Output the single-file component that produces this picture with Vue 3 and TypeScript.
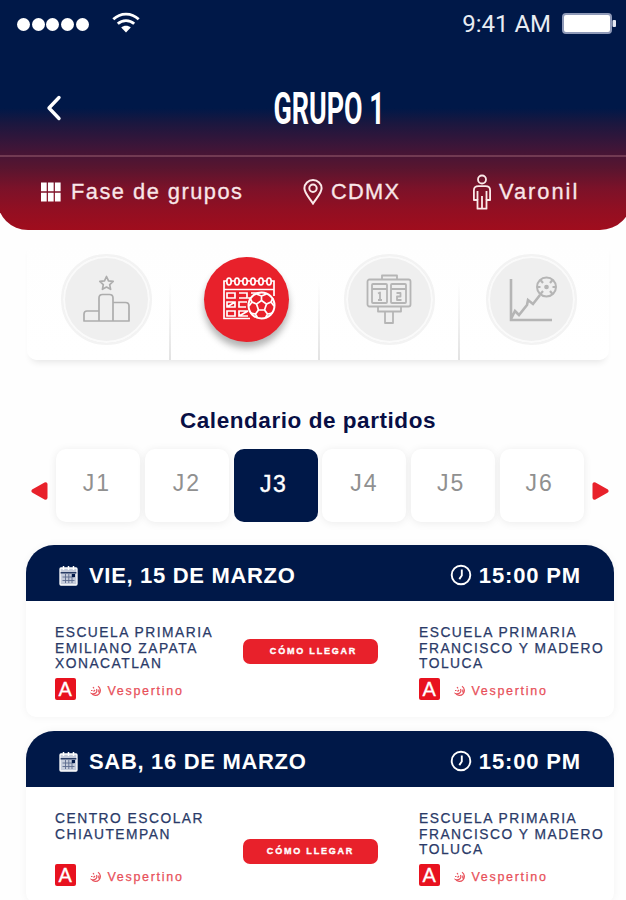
<script setup lang="ts">
import { ref } from 'vue'

interface Team {
  lines: string[]
  badge: string
  shift: string
}

interface Match {
  day: string
  time: string
  home: Team
  away: Team
}

const rounds: string[] = ['J1', 'J2', 'J3', 'J4', 'J5', 'J6']
const selected = ref('J3')

const toluca: Team = {
  lines: ['ESCUELA PRIMARIA', 'FRANCISCO Y MADERO', 'TOLUCA'],
  badge: 'A',
  shift: 'Vespertino',
}

const matches: Match[] = [
  {
    day: 'VIE, 15 DE MARZO',
    time: '15:00 PM',
    home: {
      lines: ['ESCUELA PRIMARIA', 'EMILIANO ZAPATA', 'XONACATLAN'],
      badge: 'A',
      shift: 'Vespertino',
    },
    away: toluca,
  },
  {
    day: 'SAB, 16 DE MARZO',
    time: '15:00 PM',
    home: {
      lines: ['CENTRO ESCOLAR', 'CHIAUTEMPAN'],
      badge: 'A',
      shift: 'Vespertino',
    },
    away: toluca,
  },
]
</script>

<template>
  <div class="screen">
    <header class="header">
      <div class="status">
        <div class="signal"><i v-for="n in 5" :key="n"></i></div>
        <svg class="wifi" width="28" height="21" viewBox="0 0 28 21" fill="none" stroke="#fff" stroke-width="2.8">
          <path d="M1.3 7.2C8.5.3 19.500.3 26.700 7.200" />
          <path d="M5.800 11.800c4.600-4.300 11.800-4.300 16.400 0" />
          <path d="M9.200 15.600c2.700-2.600 6.900-2.600 9.600 0L14 20.500z" fill="#fff" stroke="none" />
        </svg>
        <span class="clock">9:41 AM</span>
        <svg class="battery" width="54" height="21" viewBox="0 0 54 21">
          <rect x="1" y="1" width="48" height="19" rx="3" fill="#fff" stroke="#8f9ab8" stroke-width="2" />
          <rect x="50.500" y="7" width="3.500" height="7" rx="1" fill="#e5e9f2" />
        </svg>
      </div>
      <div class="title-row">
        <svg class="back" width="16" height="26" viewBox="0 0 16 26" fill="none" stroke="#fff" stroke-width="3.400" stroke-linecap="round" stroke-linejoin="round">
          <path d="M13 2.500 3 13l10 10.500" />
        </svg>
        <h1 class="title"><span>GRUPO 1</span></h1>
      </div>
      <div class="filters">
        <div class="filter phase">
          <svg width="20" height="20" viewBox="0 0 21 20" fill="#fff">
            <path d="M0 0h6v9.300H0zM7.300 0h6v9.300h-6zM14.600 0h6v9.300h-6zM0 10.700h6V20H0zM7.300 10.700h6V20h-6zM14.600 10.700h6V20h-6z" />
          </svg>
          <span>Fase de grupos</span>
        </div>
        <div class="filter place">
          <svg width="20" height="26" viewBox="0 0 20 26" fill="none" stroke="#fbe9e9" stroke-width="2">
            <path d="M10 24.500C7 19.500 1.400 14.300 1.400 9.300a8.600 8.300 0 0 1 17.200 0c0 5-5.600 10.200-8.600 15.200z" />
            <circle cx="10" cy="9.300" r="3.700" />
          </svg>
          <span>CDMX</span>
        </div>
        <div class="filter branch">
          <svg width="20" height="36" viewBox="0 0 20 36" fill="none" stroke="#fbe9e9" stroke-width="1.800" stroke-linejoin="round">
            <circle cx="10" cy="5.500" r="4" />
            <path d="M6.500 12.200h7c3 0 4.600 1.300 4.600 4V26h-3.600v8.700H5.500V26H1.900v-9.800c0-2.700 1.600-4 4.600-4z" />
            <path d="M5.500 17v9M14.500 17v9M10 22v12.700" />
          </svg>
          <span>Varonil</span>
        </div>
      </div>
    </header>

    <nav class="tabs">
      <div class="tab">
        <div class="disc">
          <svg width="48" height="48" viewBox="0 0 48 48" fill="none" stroke="#adadad" stroke-width="1.700" stroke-linejoin="round">
            <path d="m24.500 1.500 2 4.300 4.700.6-3.500 3.200.9 4.700-4.100-2.300-4.100 2.300.9-4.700-3.500-3.200 4.700-.6z" />
            <path d="M17 46V23q0-3.500 3.500-3.500h7q3.500 0 3.500 3.500v23zM31 27.500h12.500q3.500 0 3.500 3.500v15H31M17 36H5q-3 0-3 3v7h15" />
          </svg>
        </div>
      </div>
      <div class="tab">
        <div class="disc active">
          <svg width="54" height="46" viewBox="0 0 54 46" fill="none" stroke="#fff" stroke-width="1.700">
            <path d="M28 42.500H2V5h50v15M2 13.500h50" />
            <g fill="#e8212b">
              <ellipse cx="7" cy="5.500" rx="2.200" ry="3.500" /><ellipse cx="15" cy="5.500" rx="2.200" ry="3.500" />
              <ellipse cx="23" cy="5.500" rx="2.200" ry="3.500" /><ellipse cx="31" cy="5.500" rx="2.200" ry="3.500" />
              <ellipse cx="39" cy="5.500" rx="2.200" ry="3.500" /><ellipse cx="47" cy="5.500" rx="2.200" ry="3.500" />
            </g>
            <path d="M5 17h8v5H5zM5 26h8v5H5zM5 35h8v5H5zM17 17h8v5h-8M25 26h-8v5h7M26 35h-9v5h9M5 31l8-5M17 40l9-5" />
            <path d="M29 17h7M26 22h3" />
            <circle cx="39.500" cy="29.500" r="13" fill="#e8212b" stroke-width="2" />
            <path d="m39.500 24.500 5 3.500-2 6h-6l-2-6z" />
            <path d="M39.500 24.500V20l-5-2M39.500 20l5-2M44.500 28l4.500-2 2-4M49 26l3 4M42.500 34l3 4 5-1M45.500 38l-2 4M36.500 34l-3 4-5-1M33.500 38l2 4M34.500 28 30 26l-2-4M30 26l-3 4" />
          </svg>
        </div>
      </div>
      <div class="tab">
        <div class="disc">
          <svg width="46" height="52" viewBox="0 0 46 52" fill="none" stroke="#b5b5b5" stroke-width="1.800" stroke-linejoin="round">
            <rect x="1.500" y="6.500" width="43" height="27" rx="2" />
            <path d="M16 6.500v-4h15v4M12 34v4.500h23V34M19 39v11h8V39" />
            <rect x="6" y="11" width="15" height="19" rx="1" />
            <rect x="25" y="11" width="15" height="19" rx="1" />
            <path d="M6 16h15M25 16h15M12 20.500l2-1v7.500M12 27h4M30.500 20h4v3.500h-3.500V27h4.500" />
          </svg>
        </div>
      </div>
      <div class="tab">
        <div class="disc">
          <svg width="50" height="48" viewBox="0 0 50 48" fill="none" stroke="#b5b5b5" stroke-width="2.600">
            <path d="M4 4v41h41M4 44l4-8 4 4 8-10 1-5 5 4 7-9" />
            <circle cx="39.500" cy="12" r="9.500" stroke-width="2" />
            <circle cx="39.500" cy="12" r="1.600" fill="#b5b5b5" stroke-width="1.500" />
            <path d="m33.500 5 2.500 3M45.500 5l-2.500 3M33.500 19l2.500-3M45.500 19l-2.500-3M30.500 12h3M45.500 12h3" stroke-width="2.200" />
          </svg>
        </div>
      </div>
    </nav>

    <h2 class="heading">Calendario de partidos</h2>

    <div class="rounds">
      <svg class="arrow" width="17" height="20" viewBox="0 0 17 20" fill="#e8212b" stroke="#e8212b" stroke-width="4" stroke-linejoin="round">
        <path d="M2.500 10 14.500 3.300v13.400z" />
      </svg>
      <div class="round-list">
        <button
          v-for="r in rounds"
          :key="r"
          type="button"
          class="round"
          :class="{ selected: r === selected }"
          @click="selected = r"
        >{{ r }}</button>
      </div>
      <svg class="arrow" width="17" height="20" viewBox="0 0 17 20" fill="#e8212b" stroke="#e8212b" stroke-width="4" stroke-linejoin="round">
        <path d="M14.500 10 2.500 3.300v13.400z" />
      </svg>
    </div>

    <section class="matches">
      <article v-for="m in matches" :key="m.day" class="card">
        <div class="card-head">
          <svg width="19" height="21" viewBox="0 0 19 21">
            <rect x="1" y="3" width="17" height="17" rx="1" fill="#c5ccdb" stroke="#fff" stroke-width="1.300" />
            <path d="M1.600 7.800h15.800" stroke="#001848" stroke-width="1.200" />
            <path d="M3.500 12h12M3.500 15.500h12M6.500 9v9M9.800 9v9M13 9v9" stroke="#5c6b8d" stroke-width=".9" />
            <path d="M4.500 1v4M9.500 1v4M14.500 1v4" stroke="#fff" stroke-width="1.500" />
            <rect x="13" y="9" width="3" height="3" fill="#001848" />
          </svg>
          <span class="day">{{ m.day }}</span>
          <svg width="22" height="22" viewBox="0 0 22 22" fill="none" stroke="#fff" stroke-width="1.900">
            <circle cx="11" cy="11" r="9.300" />
            <path d="M11.800 5.500v6l-2.500 3.600" />
          </svg>
          <span class="time">{{ m.time }}</span>
        </div>
        <div class="card-body">
          <div v-for="(t, i) in [m.home, m.away]" :key="i" class="team" :class="i === 0 ? 'home' : 'away'">
            <div class="name"><div v-for="l in t.lines" :key="l">{{ l }}</div></div>
            <div class="meta">
              <span class="badge">{{ t.badge }}</span>
              <svg width="12" height="12" viewBox="0 0 12 12" fill="none" stroke="#e8505a" stroke-width="1.200">
                <path d="M8 1.200a5 5 0 1 1-6.600 7.300C4.500 9.500 8 7.500 6.500 4M1 5.500h1.500M3 2l1 1.300M3.500 6.500 5 5M8.800 4.500v3" />
              </svg>
              <span class="shift">{{ t.shift }}</span>
            </div>
          </div>
          <button type="button" class="directions" :class="{ low: m.home.lines.length < 3 }">CÓMO LLEGAR</button>
        </div>
      </article>
    </section>
  </div>
</template>

<style>
body {
  margin: 0;
  background: #fefefe;
  overflow: hidden;
}
</style>

<style scoped>
.screen {
  width: 626px;
  height: 900px;
  overflow: hidden;
  background: #fefefe;
  font-family: 'Liberation Sans', Arial, sans-serif;
}
.header {
  height: 230px;
  margin: 0 -6px 0 -3px;
  padding: 0 6px 0 3px;
  border-radius: 0 0 32px 31px;
  background: linear-gradient(#001848 0, #001848 108px, #1a173f 123px, #421537 150px, #58152f 168px, #7b1229 188px, #920f22 210px, #a00d1d 230px);
  color: #fff;
}
.status {
  height: 48px;
  display: flex;
  align-items: center;
  padding: 0 11px 0 17px;
}
.signal {
  display: flex;
  gap: 1.700px;
}
.signal i {
  width: 13px;
  height: 13px;
  border-radius: 50%;
  background: #fff;
}
.wifi {
  margin: 0 auto 4px 23px;
}
.clock {
  font: 24px/48px Roboto, sans-serif;
  color: #e8ecf3;
  margin-right: 11px;
}
.battery {
  margin: -1px -1px 0 0;
}
.title-row {
  height: 109px;
  box-sizing: border-box;
  border-bottom: 2px solid rgba(190, 130, 140, 0.35);
  display: flex;
  align-items: flex-start;
  padding: 0 46px;
}
.back {
  margin-top: 47px;
}
.title {
  flex: 1;
  margin: 36px 0 0 17px;
  height: 50px;
  font: 700 44px/50px Roboto, sans-serif;
  display: flex;
  justify-content: center;
}
.title span {
  transform: scaleX(0.61);
  white-space: nowrap;
}
.filters {
  height: 69px;
  display: grid;
  grid-template-columns: 262px 169px 1fr;
  align-items: center;
  padding: 0 0 0 41px;
  font-size: 21.800px;
  color: #f9e6e8;
  -webkit-text-stroke: 0.300px;
}
.filter {
  display: flex;
  align-items: center;
  white-space: nowrap;
}
.phase {
  gap: 10px;
  letter-spacing: 1.500px;
}
.place {
  gap: 8px;
  letter-spacing: 1.300px;
}
.branch {
  gap: 7px;
  letter-spacing: 2px;
}
.tabs {
  margin: 10px 17px 0 27px;
  height: 120px;
  display: grid;
  grid-template-columns: 144px 149px 140px 149px;
  border-radius: 10px;
  background: linear-gradient(#fefefe, #fff);
  box-shadow: 0 6px 7px -4px rgba(0, 0, 0, 0.1);
}
.tab {
  display: flex;
  justify-content: center;
  align-items: center;
  box-sizing: border-box;
  padding: 0 0 2px 0;
}
.tab:first-child {
  padding-left: 16px;
}
.tab:nth-child(2) {
  padding-left: 3px;
}
.tab:last-child {
  padding-right: 6px;
}
.tab:not(:last-child) {
  border-right: 2px solid;
  border-image: linear-gradient(transparent 35%, #e2e2e2) 1;
}
.disc {
  width: 91px;
  height: 91px;
  flex: none;
  box-sizing: border-box;
  border-radius: 50%;
  background: #efefef;
  border: 2px solid #f3f3f3;
  box-shadow: inset 0 0 0 2px #fafafa;
  display: flex;
  align-items: center;
  justify-content: center;
}
.disc.active {
  width: 85px;
  height: 85px;
  border: 0;
  background: #e8212b;
  box-shadow: 0 6px 7px rgba(0, 0, 0, 0.3);
}
.disc.active svg {
  margin-left: 5px;
}
.heading {
  margin: 47px 0 0;
  padding-right: 10px;
  text-align: center;
  font-size: 22.500px;
  line-height: 28px;
  letter-spacing: 0.560px;
  color: #080f45;
}
.rounds {
  margin: 14px 17px 0 31px;
  height: 73px;
  display: flex;
  justify-content: space-between;
  align-items: center;
}
.arrow {
  margin-top: 10px;
}
.round-list {
  display: grid;
  grid-template-columns: repeat(6, 84px);
  gap: 4.700px;
}
.round {
  height: 73px;
  border: 0;
  border-radius: 10px;
  background: #fff;
  color: #909090;
  font: 23px/26px 'Liberation Sans', Arial, sans-serif;
  letter-spacing: 2px;
  padding: 0 0 5px 0;
  box-shadow: 0 1px 8px rgba(0, 0, 0, 0.08);
}
.round.selected {
  background: #001848;
  color: #fff;
  padding: 0 4px 3px 0;
  letter-spacing: 1.500px;
  -webkit-text-stroke: 0.400px;
  box-shadow: none;
}
.round:first-child {
  padding-right: 3px;
}
.round:nth-child(n + 5) {
  padding-right: 4px;
}
.matches {
  margin: 23px 12px 0 26px;
  display: flex;
  flex-direction: column;
  gap: 14px;
}
.card {
  height: 172px;
  border-radius: 30px 30px 10px 10px;
  background: #fff;
  box-shadow: 0 0 9px rgba(0, 0, 0, 0.05);
}
.card-head {
  height: 56px;
  box-sizing: border-box;
  padding: 5px 33px 0 33px;
  border-radius: 28px 28px 0 0;
  background: #001848;
  color: #fff;
  display: flex;
  align-items: center;
  font-size: 22px;
  font-weight: 700;
}
.card-head svg {
  margin-bottom: 1px;
}
.day {
  margin: 0 auto 0 11px;
  letter-spacing: 0.680px;
}
.time {
  margin-left: 7px;
  letter-spacing: 0.850px;
}
.card-body {
  height: 116px;
  box-sizing: border-box;
  padding: 24px 0 0 29px;
  display: grid;
  grid-template-columns: 188px 176px 1fr;
}
.home {
  grid-column: 1;
  grid-row: 1;
}
.away {
  grid-column: 3;
  grid-row: 1;
}
.name {
  height: 53px;
  font-size: 13.800px;
  line-height: 15.500px;
  letter-spacing: 1.500px;
  color: #2a3a68;
  -webkit-text-stroke: 0.250px;
  white-space: nowrap;
}
.meta {
  display: flex;
  align-items: center;
}
.badge {
  width: 20.500px;
  height: 22px;
  border-radius: 2px;
  background: #e8121f;
  color: #fff;
  font-size: 20px;
  line-height: 22px;
  text-align: center;
  -webkit-text-stroke: 0.300px;
}
.meta svg {
  margin: 3px 6px 0 14px;
}
.shift {
  margin-top: 3px;
  font-size: 12.500px;
  letter-spacing: 1.700px;
  color: #e8505a;
  -webkit-text-stroke: 0.250px;
}
.directions {
  grid-column: 2;
  grid-row: 1;
  width: 135px;
  height: 25px;
  margin-top: 14px;
  padding: 0 0 0 6px;
  border: 0;
  border-radius: 7px;
  background: #e8212b;
  color: #fff;
  font: 700 9px/25px 'Liberation Sans', Arial, sans-serif;
  letter-spacing: 1.800px;
  -webkit-text-stroke: 0.350px;
}
.directions.low {
  margin-top: 28px;
  padding-left: 0;
}
</style>
